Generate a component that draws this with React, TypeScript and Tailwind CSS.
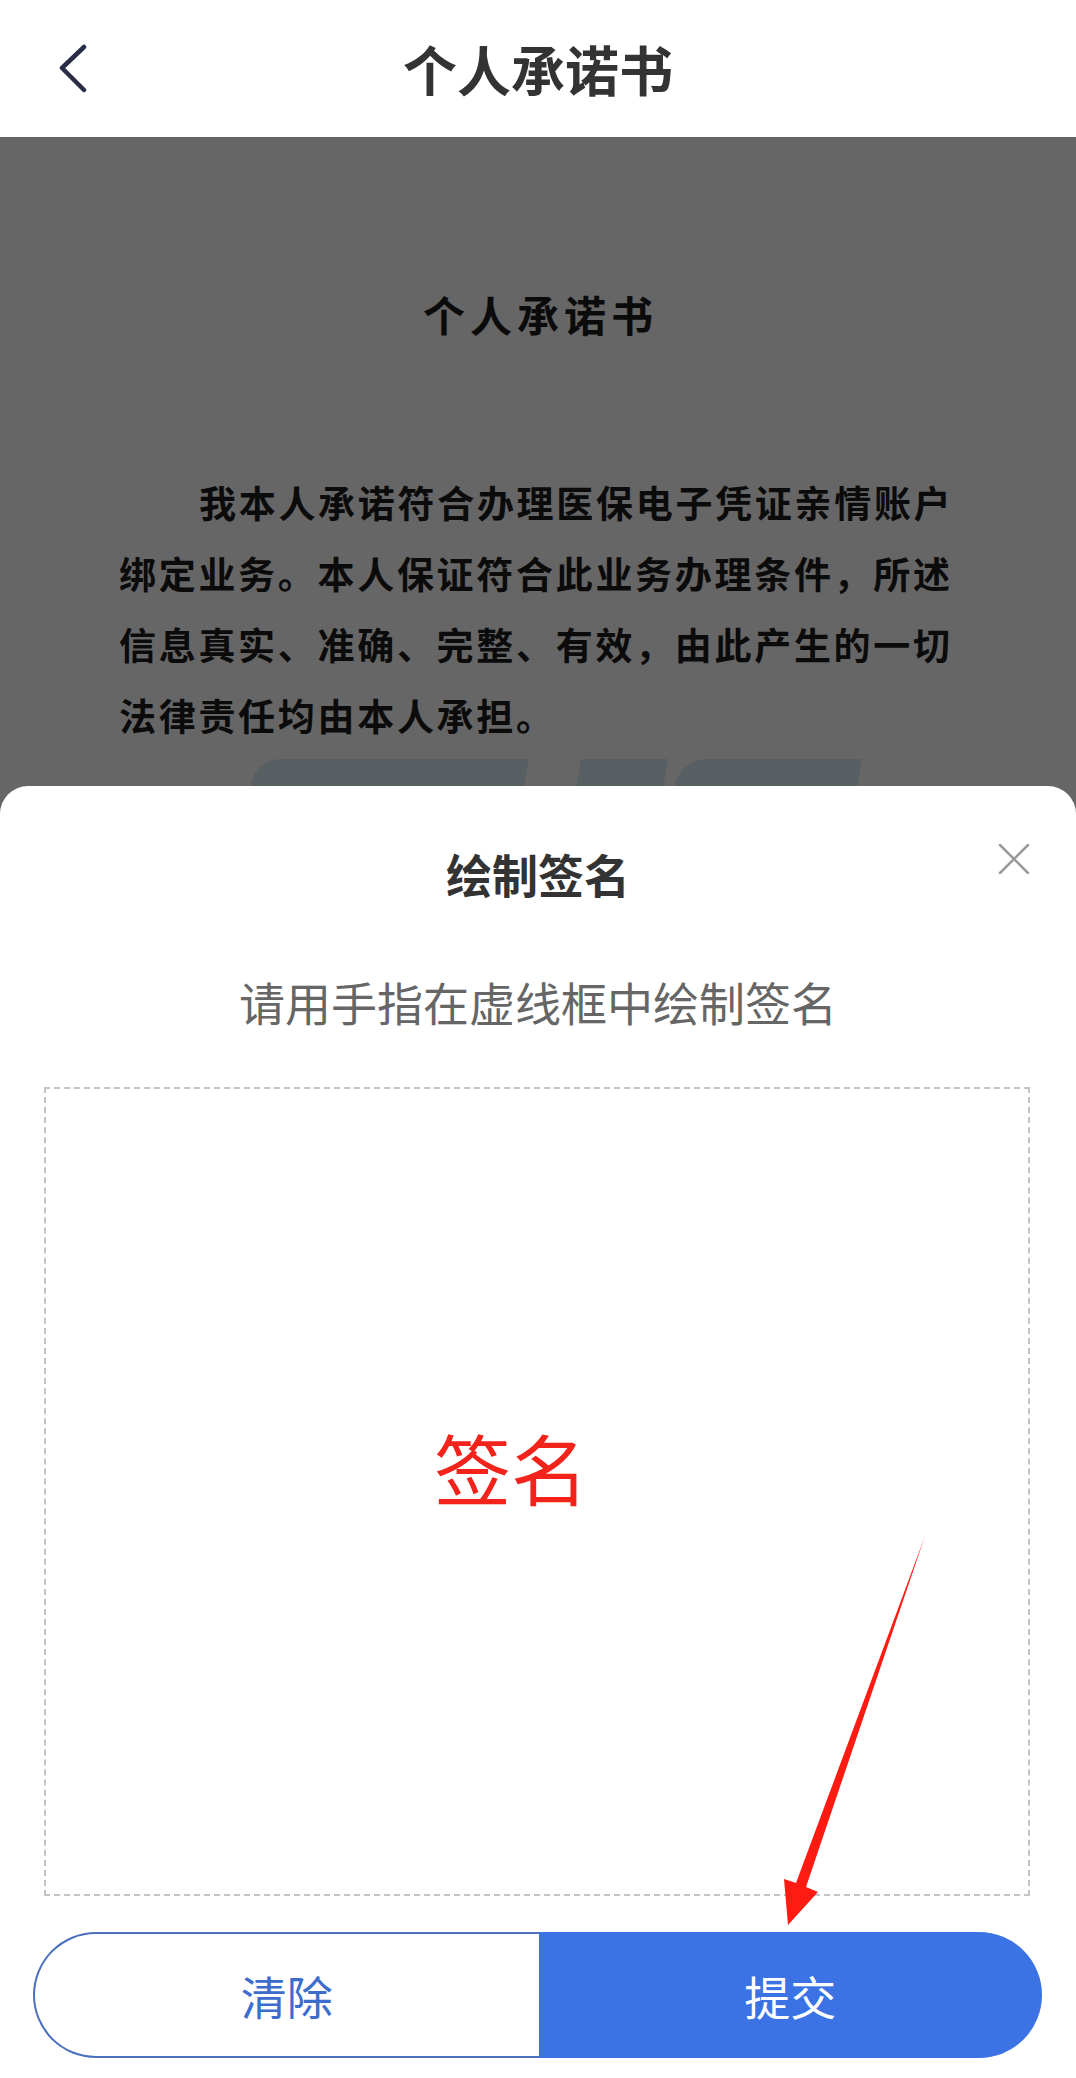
import React from "react";

const bodyLines = [
  "我本人承诺符合办理医保电子凭证亲情账户",
  "绑定业务。本人保证符合此业务办理条件，所述",
  "信息真实、准确、完整、有效，由此产生的一切",
  "法律责任均由本人承担。",
];

const App: React.FC = () => {
  return (
    <div className="relative w-[1076px] h-[2078px] overflow-hidden bg-[#666666] font-['Noto_Sans_CJK_SC',sans-serif]">
      {/* top bar */}
      <header className="grid grid-cols-[1fr_auto_1fr] items-center h-[137px] bg-white">
        <div className="pl-[58px] flex items-center">
          <svg width="32" height="50" viewBox="0 0 32 50" fill="none">
            <path
              d="M26 3 L4 24 L26 46"
              stroke="#282d45"
              strokeWidth="4.5"
              strokeLinecap="round"
              strokeLinejoin="round"
            />
          </svg>
        </div>
        <h1 className="text-[54px] leading-[60px] font-bold text-[#333333]">个人承诺书</h1>
        <div />
      </header>

      {/* dimmed document behind the sheet */}
      <section className="h-[649px] overflow-hidden flex flex-col">
        <h2 className="mt-[147px] text-center text-[42px] leading-[60px] font-bold tracking-[5px] pl-[5px] text-[#0b0b0b]">
          个人承诺书
        </h2>
        <div className="mt-[123px] ml-[119px] w-[840px] text-[37px] leading-[71px] font-bold tracking-[2.7px] text-[#0b0b0b]">
          {bodyLines.map((line, i) => (
            <div key={i} className={`whitespace-nowrap ${i === 0 ? "pl-[80px]" : ""}`}>
              {line}
            </div>
          ))}
        </div>
        <div className="mt-[8px] ml-[250px] flex items-start">
          <div className="w-[274px] h-[60px] bg-[#585f62] rounded-tl-[26px] -skew-x-[9deg]" />
          <div className="ml-[52px] w-[87px] h-[60px] bg-[#585f62] -skew-x-[9deg]" />
          <div className="ml-[11px] w-[183px] h-[60px] bg-[#585f62] rounded-tl-[28px] -skew-x-[9deg]" />
        </div>
      </section>

      {/* signature sheet */}
      <section className="h-[1292px] bg-white rounded-t-[28px] flex flex-col">
        <div className="relative pt-[57px]">
          <h3 className="text-center text-[46px] leading-[60px] font-bold text-[#333333]">绘制签名</h3>
          <button className="absolute top-[58px] right-[46px] w-[32px] h-[30px] flex items-center justify-center">
            <svg width="32" height="30" viewBox="0 0 32 30" fill="none">
              <path d="M2 1 L30 29 M30 1 L2 29" stroke="#9a9a9a" strokeWidth="2.6" strokeLinecap="round" />
            </svg>
          </button>
        </div>

        <p className="mt-[68px] text-center text-[46px] leading-[60px] text-[#666666]">
          请用手指在虚线框中绘制签名
        </p>

        <div className="mt-[56px] ml-[44px] w-[986px] h-[809px] border-2 border-dashed border-[#c4c4c4]">
          <div className="mt-[338px] ml-[388px] text-[77px] leading-[80px] text-[#f2231a]">签名</div>
        </div>

        <div className="mt-[36px] ml-[33px] w-[1009px] h-[126px] flex">
          <button className="flex-1 h-full rounded-l-full border-2 border-r-0 border-[#4a6fbd] bg-white text-[46px] text-[#3d6dcc]">
            清除
          </button>
          <button className="flex-1 h-full rounded-r-full bg-[#3b73e5] text-[46px] text-white">
            提交
          </button>
        </div>
      </section>

      {/* annotation arrow */}
      <svg
        className="absolute left-0 top-0 pointer-events-none"
        width="1076"
        height="2078"
        viewBox="0 0 1076 2078"
      >
        <polygon
          points="925,1536 806,1887 818,1892 788,1925 784,1879 796,1883"
          fill="#ff1a12"
        />
      </svg>
    </div>
  );
};

export default App;
